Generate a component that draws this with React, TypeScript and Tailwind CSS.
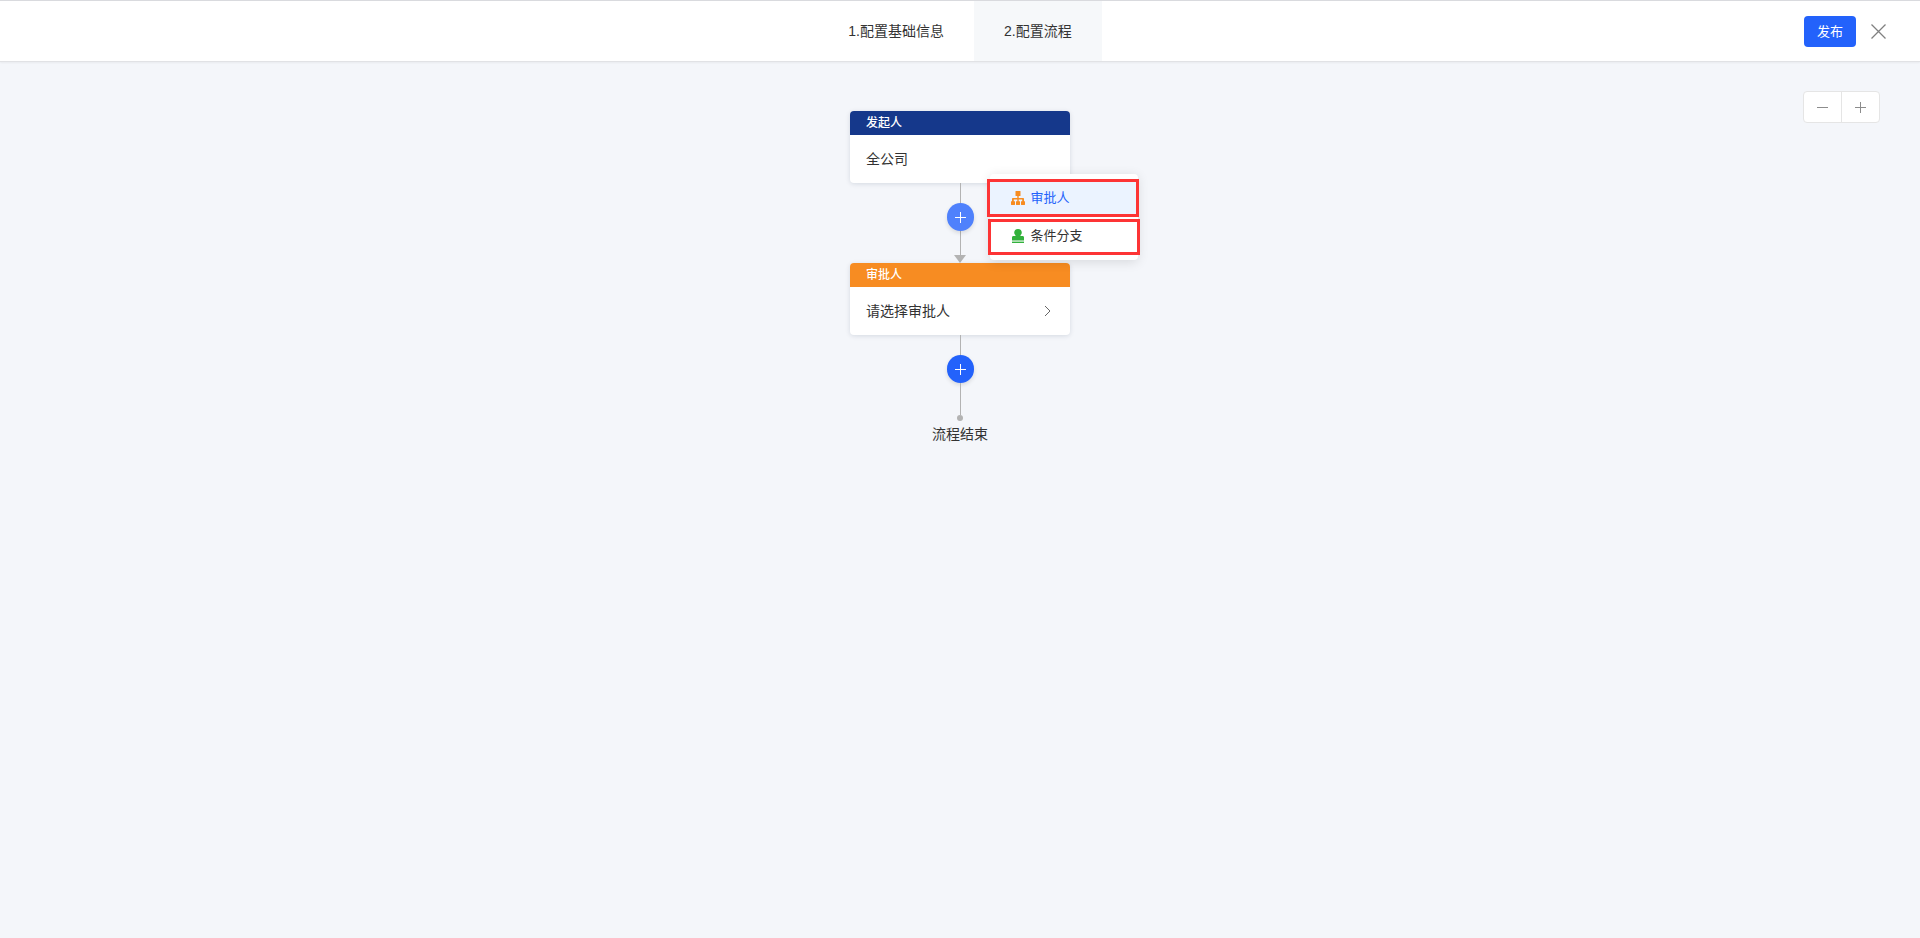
import type { ReactNode } from 'react';

function PlusIcon({ className }: { className?: string }) {
  return (
    <svg viewBox="0 0 11 11" className={className} fill="none" stroke="currentColor" shapeRendering="crispEdges" aria-hidden="true">
      <path d="M0 5.5H11M5.5 0V11" />
    </svg>
  );
}

function OrgIcon() {
  return (
    <svg viewBox="0 0 14 14" className="size-3.5 shrink-0 text-[#f78c22]" fill="currentColor" aria-hidden="true">
      <rect x="4.500" y="0" width="5" height="5" rx="0.500" />
      <path d="M6.300 4.500h1.400V7h4.500c.5 0 .8.300.8.800V11h-1.800V8.500H7.700V11H6.300V8.500H2.800V11H1V7.800c0-.5.300-.8.800-.8h4.500z" />
      <rect x="0" y="10.200" width="4" height="3.800" rx="0.400" />
      <rect x="5" y="10.200" width="4" height="3.800" rx="0.400" />
      <rect x="10" y="10.200" width="4" height="3.800" rx="0.400" />
    </svg>
  );
}

function StampIcon() {
  return (
    <svg viewBox="0 0 14 14" className="size-3.5 shrink-0 text-[#32b13c]" fill="currentColor" aria-hidden="true">
      <path d="M7 0a3.800 3.800 0 0 1 3.800 3.800c0 1.300-.8 1.900-1.300 2.600-.2.400 0 .7.500.7h1.500c1 0 1.500.6 1.500 1.500V11.500H1V8.600c0-.9.500-1.500 1.500-1.500H4c.5 0 .7-.3.500-.7C4 5.700 3.200 5.100 3.200 3.800A3.800 3.800 0 0 1 7 0z" />
      <rect x="1" y="12.600" width="12" height="1.400" />
    </svg>
  );
}

function FlowNode({ title, color, children }: { title: string; color: string; children: ReactNode }) {
  return (
    <section className="w-[220px] overflow-hidden rounded bg-white shadow-[0_1px_5px_rgba(10,30,65,0.13)]">
      <h2 className={`h-6 px-4 text-xs leading-6 font-medium text-white ${color}`}>{title}</h2>
      {children}
    </section>
  );
}

function AddButton({ color, label }: { color: string; label: string }) {
  return (
    <button
      type="button"
      aria-label={label}
      className={`flex h-7 w-[27px] items-center justify-center rounded-full text-white shadow-[0_2px_4px_rgba(0,0,0,0.12)] ${color}`}
    >
      <PlusIcon className="size-[11px]" />
    </button>
  );
}

function AddMenu() {
  return (
    <ul className="absolute -top-[29px] left-[43px] z-10 flex w-[148px] flex-col rounded bg-white py-[5px] text-[13px] shadow-[0_2px_12px_rgba(0,0,0,0.12)]">
      <li className="-mx-[3px] h-[38px] pr-0.5">
        <button type="button" className="flex size-full items-center gap-1.5 border-3 border-[#fd3435] bg-[#ebf3ff] pl-[21px] text-[#2362fb]">
          <OrgIcon />
          审批人
        </button>
      </li>
      <li className="-mx-[2px] mt-0.5 h-9">
        <button type="button" className="flex size-full items-center gap-1.5 border-3 border-[#fd3435] bg-white pb-0.5 pl-5 text-[#333]">
          <StampIcon />
          条件分支
        </button>
      </li>
    </ul>
  );
}

export default function App() {
  return (
    <div className="flex min-h-screen flex-col bg-[#f4f6fa] font-['Liberation_Sans','Noto_Sans_CJK_SC',sans-serif] text-sm text-[#333]">
      <header className="grid h-[62px] grid-cols-[1fr_auto_1fr] border-t border-b border-t-[#d9dade] border-b-[#e1e2e5] bg-white shadow-[0_1px_2px_rgba(0,0,0,0.05)]">
        <nav className="col-start-2 flex">
          <a href="#basic" className="flex items-center px-[30px] pb-px">1.配置基础信息</a>
          <a href="#flow" aria-current="step" className="flex items-center bg-[#f6f8fa] px-[30px] pb-px">2.配置流程</a>
        </nav>
        <div className="flex items-center justify-end gap-[15px] pr-[34px]">
          <button type="button" className="h-[31px] rounded bg-[#2362fb] px-[13px] pt-0.5 text-[13px] text-white">发布</button>
          <button type="button" aria-label="关闭" className="text-[#808080]">
            <svg viewBox="0 0 15 15" className="size-[15px]" fill="none" stroke="currentColor" strokeWidth="1.300" aria-hidden="true">
              <path d="M.5.5l14 14M14.500.5l-14 14" />
            </svg>
          </button>
        </div>
      </header>

      <main className="relative flex flex-1 flex-col items-center pt-[49px]">
        <div className="absolute top-[29px] right-10 flex h-8 divide-x divide-[#e5e5e5] rounded border border-[#e5e5e5] bg-white text-[#8c8c8c]">
          <button type="button" aria-label="缩小" className="flex w-[38px] items-center justify-center">
            <svg viewBox="0 0 11 11" className="size-[11px]" stroke="currentColor" shapeRendering="crispEdges" aria-hidden="true">
              <path d="M0 5.500H11" />
            </svg>
          </button>
          <button type="button" aria-label="放大" className="flex w-[37px] items-center justify-center">
            <PlusIcon className="size-[11px]" />
          </button>
        </div>

        <FlowNode title="发起人" color="bg-[#15388b]">
          <p className="flex h-12 items-center px-4">全公司</p>
        </FlowNode>

        <div className="flex flex-col items-center">
          <div className="h-5 w-px bg-[#b3b3b3]" />
          <div className="relative">
            <AddButton color="bg-[#4f81fc]" label="添加节点" />
            <AddMenu />
          </div>
          <div className="h-6 w-px bg-[#b3b3b3]" />
          <svg viewBox="0 0 12 8" className="h-2 w-3 text-[#b3b3b3]" fill="currentColor" aria-hidden="true">
            <path d="M0 0H12L6 8z" />
          </svg>
        </div>

        <FlowNode title="审批人" color="bg-[#f78c22]">
          <button type="button" className="flex h-12 w-full items-center justify-between px-4">
            请选择审批人
            <svg viewBox="0 0 12 12" className="size-3 text-[#666]" fill="none" stroke="currentColor" aria-hidden="true">
              <path d="M3 1l5 5-5 5" />
            </svg>
          </button>
        </FlowNode>

        <div className="flex flex-col items-center">
          <div className="h-5 w-px bg-[#b3b3b3]" />
          <AddButton color="bg-[#2362fb]" label="在末尾添加节点" />
          <div className="h-8 w-px bg-[#b3b3b3]" />
          <div className="size-1.5 rounded-full bg-[#b3b3b3]" />
        </div>
        <p className="mt-[3px]">流程结束</p>
      </main>
    </div>
  );
}
